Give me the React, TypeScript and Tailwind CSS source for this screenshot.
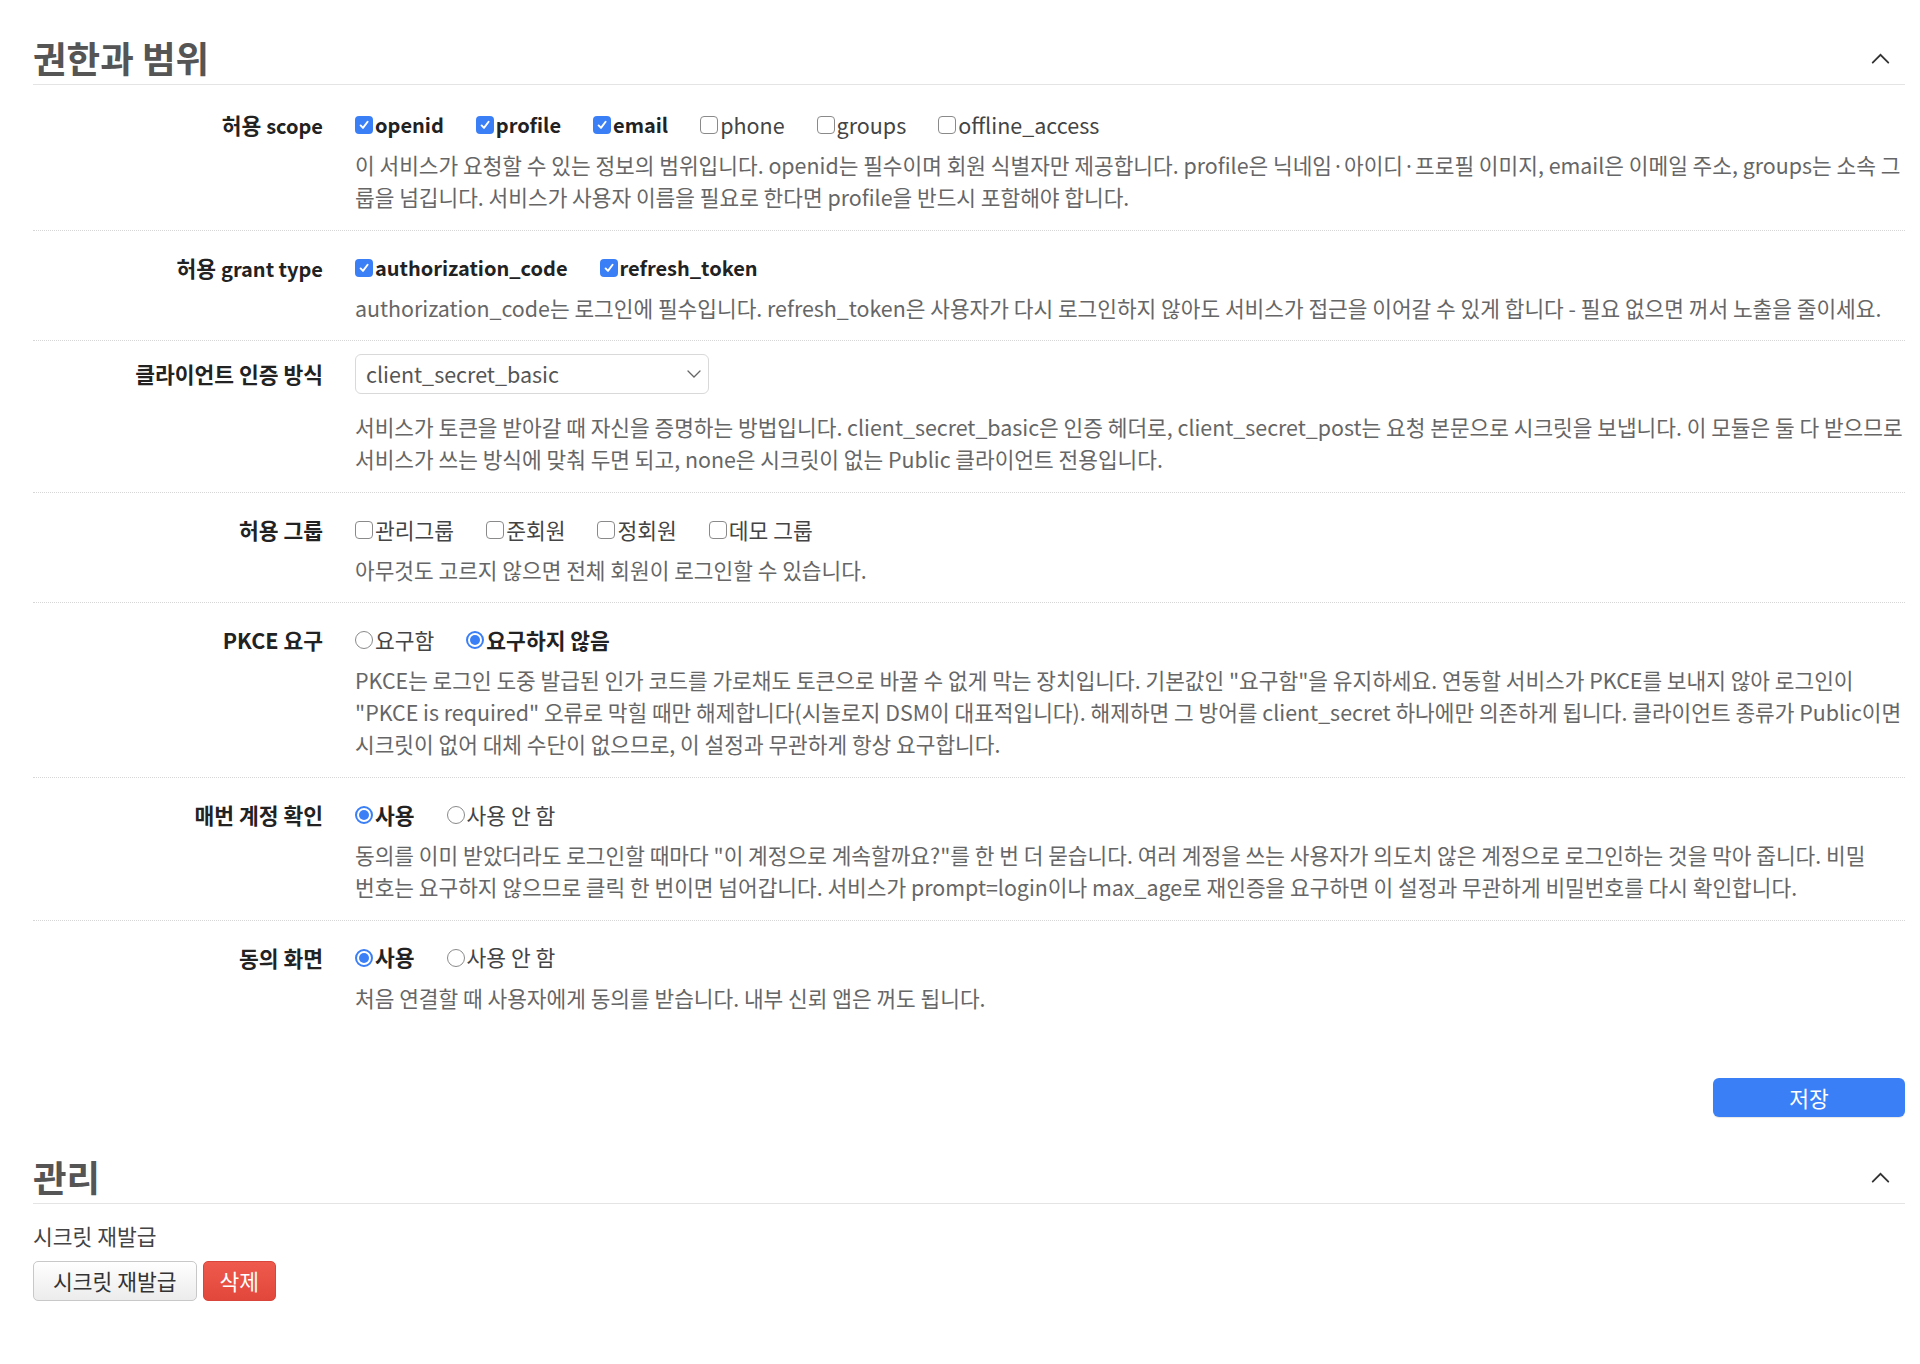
import type { ReactNode } from "react";

function Box({ checked, round }: { checked?: boolean; round?: boolean }) {
  if (round) {
    return checked ? (
      <span className="flex h-[18px] w-[18px] shrink-0 items-center justify-center rounded-full border-2 border-[#3b7ff6] bg-white">
        <span className="h-[10px] w-[10px] rounded-full bg-[#3b7ff6]" />
      </span>
    ) : (
      <span className="h-[18px] w-[18px] shrink-0 rounded-full border border-[#8a8a8a] bg-white" />
    );
  }
  return checked ? (
    <span className="flex h-[18px] w-[18px] shrink-0 items-center justify-center rounded-[4px] bg-[#3b7ff6]">
      <svg viewBox="0 0 12 12" className="h-[12px] w-[12px]">
        <path
          d="M2.6 6.4 5 8.9 9.6 2.8"
          fill="none"
          stroke="white"
          strokeWidth="1.9"
          strokeLinecap="round"
          strokeLinejoin="round"
        />
      </svg>
    </span>
  ) : (
    <span className="h-[18px] w-[18px] shrink-0 rounded-[4px] border border-[#8a8a8a] bg-white" />
  );
}

// bold latin in the reference font runs narrower than the hangul, so checked latin options get a smaller size
function Opt({
  checked,
  label,
  round,
  latin,
}: {
  checked?: boolean;
  label: string;
  round?: boolean;
  latin?: boolean;
}) {
  return (
    <label className="flex items-center">
      <Box checked={checked} round={round} />
      <span
        className={
          checked
            ? "ml-[2px] font-bold text-[#222] " + (latin ? "text-[20px]" : "")
            : "ml-[2px] text-[#444]"
        }
      >
        {label}
      </span>
    </label>
  );
}

function ChevronUp() {
  return (
    <svg viewBox="0 0 20 12" className="mr-[15px] h-[11px] w-[19px]">
      <path d="M1.5 10.5 10 2l8.5 8.5" fill="none" stroke="#333" strokeWidth="2" strokeLinecap="round" />
    </svg>
  );
}

function SectionHead({ title }: { title: string }) {
  return (
    <div className="flex items-center justify-between border-b border-[#e4e4e4] pb-[4px]">
      <h2 className="h-[44px] text-[36.5px] font-bold leading-[44px] text-[#555]">{title}</h2>
      <ChevronUp />
    </div>
  );
}

function Row({
  label,
  control,
  desc,
  last,
  select,
}: {
  label: ReactNode;
  control: ReactNode;
  desc: string[];
  last?: boolean;
  select?: boolean;
}) {
  return (
    <div
      className={
        (select ? "pt-[13px] " : "pt-[21px] ") +
        "flex pb-[16.6px] " +
        (last ? "" : "border-b border-dotted border-[#d6d6d6]")
      }
    >
      <div
        className={
          (select ? "h-[40px] leading-[40px] " : "h-8 leading-8 ") +
          "w-[290px] shrink-0 text-right font-bold text-[#222]"
        }
      >
        {label}
      </div>
      <div className="ml-8 min-w-0 flex-1">
        <div className={select ? "flex h-[40px] items-center" : "flex h-8 items-center gap-[32px]"}>
          {control}
        </div>
        <p className={(select ? "mt-[17px] " : "mt-2 ") + "text-[21.4px] leading-8 text-[#666]"}>
          {desc.map((line) => (
            <span key={line} className="block whitespace-nowrap">
              {line}
            </span>
          ))}
        </p>
      </div>
    </div>
  );
}

const lat = "text-[20px]";

export default function App() {
  return (
    <div className="min-h-screen overflow-hidden bg-white pb-10 pl-[33px] pr-[15px] pt-[36px] font-['Noto_Sans_CJK_KR','Noto_Sans',sans-serif] text-[21.5px]">
      <SectionHead title="권한과 범위" />

      <div className="mt-[3px]">
        <Row
          label={
            <>
              허용 <span className={lat}>scope</span>
            </>
          }
          control={
            <>
              <Opt checked latin label="openid" />
              <Opt checked latin label="profile" />
              <Opt checked latin label="email" />
              <Opt label="phone" />
              <Opt label="groups" />
              <Opt label="offline_access" />
            </>
          }
          desc={[
            "이 서비스가 요청할 수 있는 정보의 범위입니다. openid는 필수이며 회원 식별자만 제공합니다. profile은 닉네임·아이디·프로필 이미지, email은 이메일 주소, groups는 소속 그",
            "룹을 넘깁니다. 서비스가 사용자 이름을 필요로 한다면 profile을 반드시 포함해야 합니다.",
          ]}
        />
        <Row
          label={
            <>
              허용 <span className={lat}>grant type</span>
            </>
          }
          control={
            <>
              <Opt checked latin label="authorization_code" />
              <Opt checked latin label="refresh_token" />
            </>
          }
          desc={[
            "authorization_code는 로그인에 필수입니다. refresh_token은 사용자가 다시 로그인하지 않아도 서비스가 접근을 이어갈 수 있게 합니다 - 필요 없으면 꺼서 노출을 줄이세요.",
          ]}
        />
        <Row
          select
          label="클라이언트 인증 방식"
          control={
            <div className="flex h-[40px] w-[354px] items-center justify-between rounded-[6px] border border-[#d9d9d9] bg-white pl-[10px] pr-[7px] text-[#555]">
              <span>client_secret_basic</span>
              <svg viewBox="0 0 14 8" className="h-[8px] w-[14px]">
                <path d="M1 1l6 6 6-6" fill="none" stroke="#666" strokeWidth="1.3" strokeLinecap="round" />
              </svg>
            </div>
          }
          desc={[
            "서비스가 토큰을 받아갈 때 자신을 증명하는 방법입니다. client_secret_basic은 인증 헤더로, client_secret_post는 요청 본문으로 시크릿을 보냅니다. 이 모듈은 둘 다 받으므로",
            "서비스가 쓰는 방식에 맞춰 두면 되고, none은 시크릿이 없는 Public 클라이언트 전용입니다.",
          ]}
        />
        <Row
          label="허용 그룹"
          control={
            <>
              <Opt label="관리그룹" />
              <Opt label="준회원" />
              <Opt label="정회원" />
              <Opt label="데모 그룹" />
            </>
          }
          desc={["아무것도 고르지 않으면 전체 회원이 로그인할 수 있습니다."]}
        />
        <Row
          label="PKCE 요구"
          control={
            <>
              <Opt round label="요구함" />
              <Opt round checked label="요구하지 않음" />
            </>
          }
          desc={[
            `PKCE는 로그인 도중 발급된 인가 코드를 가로채도 토큰으로 바꿀 수 없게 막는 장치입니다. 기본값인 "요구함"을 유지하세요. 연동할 서비스가 PKCE를 보내지 않아 로그인이`,
            `"PKCE is required" 오류로 막힐 때만 해제합니다(시놀로지 DSM이 대표적입니다). 해제하면 그 방어를 client_secret 하나에만 의존하게 됩니다. 클라이언트 종류가 Public이면`,
            "시크릿이 없어 대체 수단이 없으므로, 이 설정과 무관하게 항상 요구합니다.",
          ]}
        />
        <Row
          label="매번 계정 확인"
          control={
            <>
              <Opt round checked label="사용" />
              <Opt round label="사용 안 함" />
            </>
          }
          desc={[
            `동의를 이미 받았더라도 로그인할 때마다 "이 계정으로 계속할까요?"를 한 번 더 묻습니다. 여러 계정을 쓰는 사용자가 의도치 않은 계정으로 로그인하는 것을 막아 줍니다. 비밀`,
            "번호는 요구하지 않으므로 클릭 한 번이면 넘어갑니다. 서비스가 prompt=login이나 max_age로 재인증을 요구하면 이 설정과 무관하게 비밀번호를 다시 확인합니다.",
          ]}
        />
        <Row
          last
          label="동의 화면"
          control={
            <>
              <Opt round checked label="사용" />
              <Opt round label="사용 안 함" />
            </>
          }
          desc={["처음 연결할 때 사용자에게 동의를 받습니다. 내부 신뢰 앱은 꺼도 됩니다."]}
        />
      </div>

      <div className="mt-[48px] flex justify-end">
        <button className="h-[39px] w-[192px] rounded-[6px] bg-[#3b7ff6] text-white shadow-[0_1px_1px_rgba(0,0,0,0.1)]">
          저장
        </button>
      </div>

      <div className="mt-[38px]">
        <SectionHead title="관리" />
      </div>
      <div className="mt-[16px] leading-8 text-[#444]">시크릿 재발급</div>
      <div className="mt-[9px] flex gap-[6px]">
        <button className="h-[40px] rounded-[5px] border border-[#c8c8c8] bg-gradient-to-b from-white to-[#ececec] px-[19px] text-[#333]">
          시크릿 재발급
        </button>
        <button className="h-[40px] rounded-[5px] border border-[#d9453a] bg-gradient-to-b from-[#ee5a4d] to-[#e2473b] px-4 text-white">
          삭제
        </button>
      </div>
    </div>
  );
}
